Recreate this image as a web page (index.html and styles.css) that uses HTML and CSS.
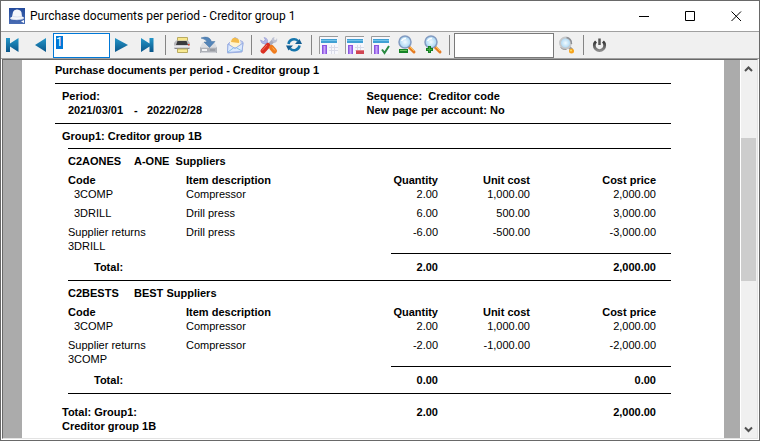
FILE: index.html
```html
<!DOCTYPE html>
<html lang="en">
<head>
<meta charset="utf-8">
<title>Purchase documents per period - Creditor group 1</title>
<link rel="stylesheet" href="styles.css">
</head>
<body>
<svg class="defs" width="0" height="0" aria-hidden="true">
  <defs>
    <linearGradient id="blue" x1="0" y1="0" x2="0" y2="1"><stop offset="0" stop-color="#2496c9"/><stop offset="1" stop-color="#0b568a"/></linearGradient>
    <linearGradient id="steel" x1="0" y1="0" x2="0" y2="1"><stop offset="0" stop-color="#333"/><stop offset="1" stop-color="#8a8a8a"/></linearGradient>
    <linearGradient id="app" x1="0" y1="0" x2="0" y2="1"><stop offset="0" stop-color="#234a9c"/><stop offset="1" stop-color="#4a6db4"/></linearGradient>
    <radialGradient id="lens"><stop offset="0" stop-color="#f2fbff"/><stop offset="1" stop-color="#a5d4f3"/></radialGradient>
    <g id="grid">
      <rect x="4" y="4" width="18" height="17" fill="#f6f7fc"/>
      <path d="M3.500 21V3.500H22" fill="none" stroke="#9a9a9a"/>
      <rect x="5" y="6" width="16" height="4" fill="#3fa0d4"/><path d="M5 7.500H21" stroke="#72c2e8"/>
      <rect x="6" y="12" width="5" height="9" fill="#8a55e0"/><path d="M8.500 13V21" stroke="#c9a4fa" stroke-width="2"/>
      <path d="M13 14.500H22M13 17.500H22M15.500 12V21M18.500 12V21" stroke="#d9dbe8"/>
    </g>
    <g id="glass">
      <path d="M15 14L20 19" stroke="#e57b24" stroke-width="3" stroke-linecap="round"/>
      <path d="M16 14L20 18" stroke="#ffc34d"/>
      <circle cx="11" cy="9" r="6" fill="url(#lens)" stroke="#839bc1" stroke-width="1.5"/>
      <path d="M7.5 8Q9 5 12 5.5" fill="none" stroke="#fff" stroke-width="1.5"/>
    </g>
  </defs>
</svg>
<div class="window">
  <header class="titlebar">
    <svg class="app-icon" viewBox="0 0 16 16" aria-hidden="true"><rect width="16" height="16" fill="url(#app)"/><path d="M3 9L4 4Q5 1 8.500 1.500Q12 2 12.500 4.500L13 8.500Q15.500 9 15 10.500Q8 13 1.500 11Q0.500 9.500 3 9Z" fill="#f4f5fa"/><path d="M2 11Q8 12.500 14 11M4 8.500Q8 9.500 13 8.500" stroke="#cfd6e8" fill="none" stroke-width=".7"/><path d="M12 13.500L15 12V15Z" fill="#fff"/></svg>
    <h1 class="caption">Purchase documents per period - Creditor group 1</h1>
    <button class="win-btn" aria-label="Minimize"><svg viewBox="0 0 11 11"><path d="M0 5.500H10"/></svg></button>
    <button class="win-btn" aria-label="Maximize"><svg viewBox="0 0 11 11"><path d="M.5 .5H9.500V9.500H.5Z"/></svg></button>
    <button class="win-btn" aria-label="Close"><svg viewBox="0 0 11 11"><path d="M.5 .5L10 10M10 .5L.5 10"/></svg></button>
  </header>

  <div class="toolbar" role="toolbar" aria-label="Report">
    <button class="tool" aria-label="First page"><svg viewBox="0 0 26 24"><path d="M5 5H9V10.500L17.500 5V19L9 13.500V19H5Z" fill="url(#blue)"/></svg></button>
    <button class="tool" aria-label="Previous page"><svg viewBox="0 0 26 24"><path d="M19 5V19L8 12Z" fill="url(#blue)"/></svg></button>
    <span class="page-box"><input class="page-input" type="text" value="1" size="1" aria-label="Page number"></span>
    <button class="tool" aria-label="Next page"><svg viewBox="0 0 26 24"><path d="M5 5L18 12L5 19Z" fill="url(#blue)"/></svg></button>
    <button class="tool" aria-label="Last page"><svg viewBox="0 0 26 24"><path d="M5 5L13.500 10.500V5H17.500V19H13.500V13.500L5 19Z" fill="url(#blue)"/></svg></button>
    <span class="sep"></span>
    <button class="tool" aria-label="Print"><svg viewBox="0 0 26 24"><path d="M7.500 8V4.500H17.500V8" fill="#f7e68a" stroke="#b9ab60"/><path d="M4 10L6 7.500H18L20 10V16H4Z" fill="#b9b9bd"/><path d="M7.500 8H16.500L18 12H6Z" fill="#3b3b3e"/><path d="M4 13.500H20" stroke="#e9e9ee" stroke-width="2"/><path d="M5 15.500H19" stroke="#88888c"/><path d="M7.500 16H17.500V19.500H7.500Z" fill="#f9ea92" stroke="#b9ab60"/><rect x="18" y="11" width="1.500" height="1.500" fill="#e5402c"/></svg></button>
    <button class="tool" aria-label="Save"><svg viewBox="0 0 26 24"><path d="M7 9H18L21 14V20H4V14Z" fill="#dcdee2"/><path d="M4 14H21V20H4Z" fill="#aeb1b7"/><path d="M5 19.500H20M4.500 14.500H20.500" stroke="#cfd1d6"/><path d="M6 17H11" stroke="#f3f4f6" stroke-width="2"/><path d="M14 17H19" stroke="#83878f"/><path d="M5 5Q13 2 15.500 8.500H19L13.500 14.500L8 9H11Q10 6 5 5Z" fill="#5385b9" stroke="#44719f" stroke-width=".5"/></svg></button>
    <button class="tool" aria-label="Send by e-mail"><svg viewBox="0 0 26 24"><path d="M6 11L13 4.500L21 9L20 19L5.500 20Z" fill="#c1cef4" stroke="#a3b2e2"/><path d="M8 7L18 6L19 14H8Z" fill="#fff4cf"/><path d="M9 9Q10 4 14 5Q18 6 17 10Z" fill="#f3bb4b"/><path d="M6 11L13 15.500L21 10L20 18.500L5.500 19.500Z" fill="#dbe9ff" stroke="#98aee2"/><path d="M6 19L12 14.500M20 18L14 14.500" stroke="#86c3e4"/></svg></button>
    <span class="sep"></span>
    <button class="tool" aria-label="Setup"><svg viewBox="0 0 26 24"><path d="M8 8L14 14" stroke="#9a9fd6" stroke-width="3.500"/><path d="M4.500 7Q5 11 9 11Q12 10 11.500 7Q10.500 4.500 8 4.500L9.500 7L7.500 8.500Z" fill="#b4b9e8" stroke="#9499d2" stroke-width=".6"/><path d="M18 7L13 12" stroke="#a9abbd" stroke-width="3.500"/><path d="M16 8Q15 4.500 18.500 4L18 6.500L20 7L21 5Q22 9 18.500 10Z" fill="#bfc3d4"/><path d="M12 12.500L7 18" stroke="#da2f22" stroke-width="5" stroke-linecap="round"/><path d="M11 12L6 17.500" stroke="#f0705f"/><path d="M15.500 14.500L18.500 18" stroke="#ef7c1f" stroke-width="5" stroke-linecap="round"/><path d="M16.500 14.500L19 17.500" stroke="#ffb556"/></svg></button>
    <button class="tool" aria-label="Refresh"><svg viewBox="0 0 26 24"><path d="M6.500 11A5.500 5.500 0 0 1 16 8M17.500 12.500A5.500 5.500 0 0 1 8 15.500" fill="none" stroke="#1676ad" stroke-width="2.500"/><path d="M13 11H20L17.500 6ZM4 12.500H11L6.500 17.500Z" fill="#125d92"/></svg></button>
    <span class="sep"></span>
    <button class="tool" aria-label="Show columns"><svg viewBox="0 0 26 24"><use href="#grid"/></svg></button>
    <button class="tool" aria-label="Remove column"><svg viewBox="0 0 26 24"><use href="#grid"/><rect x="14" y="17" width="8" height="4" fill="#cf4553"/><path d="M14 17.500H22" stroke="#e07c85"/></svg></button>
    <button class="tool" aria-label="Apply columns"><svg viewBox="0 0 26 24"><use href="#grid"/><rect x="12" y="12" width="10" height="9" fill="#f6f7fc"/><path d="M14 16.500L16.500 20L21 13" fill="none" stroke="#298a40" stroke-width="2"/></svg></button>
    <button class="tool" aria-label="Zoom out"><svg viewBox="0 0 26 24"><use href="#glass"/><rect x="5" y="16" width="9" height="4" fill="#168427"/><path d="M6 17.500H13" stroke="#6bc45d"/></svg></button>
    <button class="tool" aria-label="Zoom in"><svg viewBox="0 0 26 24"><use href="#glass"/><path d="M9.500 13V20M6 16.500H13" stroke="#138024" stroke-width="3"/><path d="M9.500 14V19M7 16.500H12" stroke="#43a83e"/></svg></button>
    <span class="sep"></span>
    <input class="find-input" type="text" size="1" aria-label="Search text">
    <button class="tool" aria-label="Find"><svg viewBox="0 0 26 24"><path d="M15 14L18 17" stroke="#999" stroke-width="3"/><circle cx="11.500" cy="10" r="5.500" fill="url(#lens)" stroke="#c6c8ca" stroke-width="2"/><path d="M12.500 4.500A6 6 0 0 1 17.500 11" fill="none" stroke="#8c8f94" stroke-width="1.500"/><path d="M6.500 14.500Q8.500 17 12.500 16.500" fill="none" stroke="#999" stroke-width="1"/><circle cx="17.500" cy="18" r="2.500" fill="#f6a21b"/><circle cx="17" cy="17.500" r="1" fill="#ffdc61"/></svg></button>
    <span class="sep"></span>
    <button class="tool" aria-label="Exit"><svg viewBox="0 0 26 24"><path d="M8 8.500A5.200 5.200 0 1 0 15 8.500" fill="none" stroke="url(#steel)" stroke-width="2.800"/><path d="M11.500 5.500V12" stroke="#555" stroke-width="2.500"/></svg></button>
  </div>

  <div class="viewer">
    <main class="sheet">
      <h2 class="report-title">Purchase documents per period - Creditor group 1</h2>
      <section class="criteria">
        <div>
          <div>Period:</div>
          <div class="dates"><span>2021/03/01</span><span>-</span><span>2022/02/28</span></div>
        </div>
        <div>
          <div>Sequence:&nbsp; Creditor code</div>
          <div>New page per account: No</div>
        </div>
      </section>
      <h3 class="group-title">Group1: Creditor group 1B</h3>

      <section class="supplier">
        <h4 class="supplier-name"><span>C2AONES</span><span>A-ONE&nbsp; Suppliers</span></h4>
        <table class="items">
          <colgroup><col class="c-code"><col><col class="c-qty"><col class="c-unit"><col class="c-cost"></colgroup>
          <thead><tr><th>Code</th><th>Item description</th><th class="num">Quantity</th><th class="num">Unit cost</th><th class="num">Cost price</th></tr></thead>
          <tbody>
            <tr><td class="indent">3COMP</td><td>Compressor</td><td class="num">2.00</td><td class="num">1,000.00</td><td class="num">2,000.00</td></tr>
            <tr><td class="indent">3DRILL</td><td>Drill press</td><td class="num">6.00</td><td class="num">500.00</td><td class="num">3,000.00</td></tr>
            <tr><td>Supplier returns<br>3DRILL</td><td>Drill press</td><td class="num">-6.00</td><td class="num">-500.00</td><td class="num">-3,000.00</td></tr>
          </tbody>
          <tfoot><tr><th class="total" colspan="2">Total:</th><td class="num">2.00</td><td class="num"></td><td class="num">2,000.00</td></tr></tfoot>
        </table>
      </section>

      <section class="supplier">
        <h4 class="supplier-name"><span>C2BESTS</span><span>BEST Suppliers</span></h4>
        <table class="items">
          <colgroup><col class="c-code"><col><col class="c-qty"><col class="c-unit"><col class="c-cost"></colgroup>
          <thead><tr><th>Code</th><th>Item description</th><th class="num">Quantity</th><th class="num">Unit cost</th><th class="num">Cost price</th></tr></thead>
          <tbody>
            <tr><td class="indent">3COMP</td><td>Compressor</td><td class="num">2.00</td><td class="num">1,000.00</td><td class="num">2,000.00</td></tr>
            <tr><td>Supplier returns<br>3COMP</td><td>Compressor</td><td class="num">-2.00</td><td class="num">-1,000.00</td><td class="num">-2,000.00</td></tr>
          </tbody>
          <tfoot><tr><th class="total" colspan="2">Total:</th><td class="num">0.00</td><td class="num"></td><td class="num">0.00</td></tr></tfoot>
        </table>
      </section>

      <section class="group-total">
        <table class="items">
          <colgroup><col><col class="c-qty"><col class="c-unit"><col class="c-cost"></colgroup>
          <tbody><tr><th>Total: Group1:<br>Creditor group 1B</th><th class="num">2.00</th><th class="num"></th><th class="num">2,000.00</th></tr></tbody>
        </table>
      </section>
    </main>
    <div class="scrollbar">
      <button class="scroll-btn" aria-label="Scroll up"><svg viewBox="0 0 15 17"><path d="M4 11L7.500 7.500L11 11"/></svg></button>
      <div class="track"><span class="before"></span><span class="thumb"></span><span class="after"></span></div>
      <button class="scroll-btn" aria-label="Scroll down"><svg viewBox="0 0 15 17"><path d="M4 6.500L7.500 10L11 6.500"/></svg></button>
    </div>
  </div>
</div>
</body>
</html>
```
FILE: styles.css
```css
* { box-sizing: border-box; }

body {
  margin: 0;
  background: #fff;
  color: #000;
  font: 11px/14px "Liberation Sans", Arial, sans-serif;
}

h1, h2, h3, h4 { margin: 0; font-size: 11px; font-weight: bold; }
button { padding: 0; border: 0; background: none; }
svg { display: block; }
.defs { position: absolute; }

.window {
  display: flex;
  flex-direction: column;
  height: 100vh;
  border: 1px solid #696969;
}

/* Title bar */
.titlebar {
  display: flex;
  flex: none;
  align-items: center;
  height: 30px;
  padding-left: 8px;
}
.app-icon { width: 16px; height: 16px; }
.titlebar .caption {
  flex: 1;
  margin-left: 5px;
  font: 12px/16px Roboto, "Segoe UI", sans-serif;
  white-space: nowrap;
}
.win-btn {
  display: flex;
  align-items: center;
  justify-content: center;
  width: 46px;
  height: 30px;
}
.win-btn svg { width: 11px; height: 11px; fill: none; stroke: #000; }

/* Toolbar */
.toolbar {
  display: flex;
  flex: none;
  align-items: center;
  height: 28px;
  border-top: 1px solid #a0a0a0;
  border-bottom: 1px solid #a0a0a0;
  background: #f0f0f0;
}
.tool { flex: none; width: 26px; height: 24px; }
.tool svg { width: 26px; height: 24px; }
.sep {
  flex: none;
  width: 1px;
  height: 20px;
  margin: 0 4px 0 3px;
  background: #858585;
}
.page-box, .find-input {
  flex: none;
  height: 25px;
  border: 1px solid #7a7a7a;
  background: #fff;
}
.page-box { width: 57px; padding: 2px; border-color: #0078d7; }
.page-input {
  display: block;
  width: 7px;
  height: 13px;
  padding: 0;
  border: 0;
  background: #0078d7;
  color: #fff;
  font: 12px/13px Roboto, "Segoe UI", sans-serif;
}
.find-input { width: 100px; padding: 0 3px; }

/* Report viewer */
.viewer {
  display: flex;
  flex: 1;
  min-height: 0;
  margin: 0 1px 1px;
  border: 1px solid #696969;
  border-right-color: #e3e3e3;
  border-bottom-color: #e3e3e3;
  background: #ababab;
}
.sheet {
  flex: 1;
  min-width: 0;
  margin: 0 16px 0 19px;
  padding: 3px 53px 0 33px;
  overflow: hidden;
  background: #fff;
}
.report-title { padding-bottom: 6px; border-bottom: 1px solid #000; }
.criteria {
  display: grid;
  grid-template-columns: 1fr 1fr;
  padding: 5px 0 6px 7px;
  border-bottom: 1px solid #000;
  font-weight: bold;
}
.dates {
  display: grid;
  grid-template-columns: 66px 13px auto;
  padding-left: 6px;
}
.group-title { padding: 5px 0 5px 7px; }

.supplier { margin-left: 13px; border-top: 1px solid #000; }
.supplier-name {
  display: grid;
  grid-template-columns: 66px auto;
  padding: 5px 0;
}
.items { width: 100%; border-collapse: separate; border-spacing: 0; table-layout: fixed; }
.items th, .items td { padding: 0; text-align: left; vertical-align: top; }
.items .num { text-align: right; white-space: nowrap; }
.items .num:last-child { padding-right: 15px; }
.c-code { width: 118px; }
.c-qty { width: 47px; }
.c-unit { width: 92px; }
.c-cost { width: 141px; }
.items tbody tr:not(:last-child) td { padding-bottom: 5px; }
.items tbody .indent { padding-left: 6px; }
.items tfoot th, .items tfoot td { padding-top: 6px; padding-bottom: 6px; font-weight: bold; }
.items tfoot .total { padding-top: 7px; padding-left: 26px; }
.items tfoot .num { border-top: 1px solid #000; }
.group-total { margin-left: 13px; border-top: 1px solid #000; padding-top: 11px; }
.group-total th:first-child { display: block; margin-left: -6px; }

/* Scrollbar */
.scrollbar {
  display: flex;
  flex: none;
  flex-direction: column;
  width: 17px;
  border-left: 1px solid #fff;
  background: #f0f0f0;
}
.scroll-btn { flex: none; width: 15px; height: 17px; }
.scroll-btn svg { width: 15px; height: 17px; fill: none; stroke: #505050; stroke-width: 2; }
.track { display: flex; flex: 1; flex-direction: column; }
.before { flex: 61; }
.thumb { flex: 143; width: 15px; background: #cdcdcd; }
.after { flex: 140; }
```
